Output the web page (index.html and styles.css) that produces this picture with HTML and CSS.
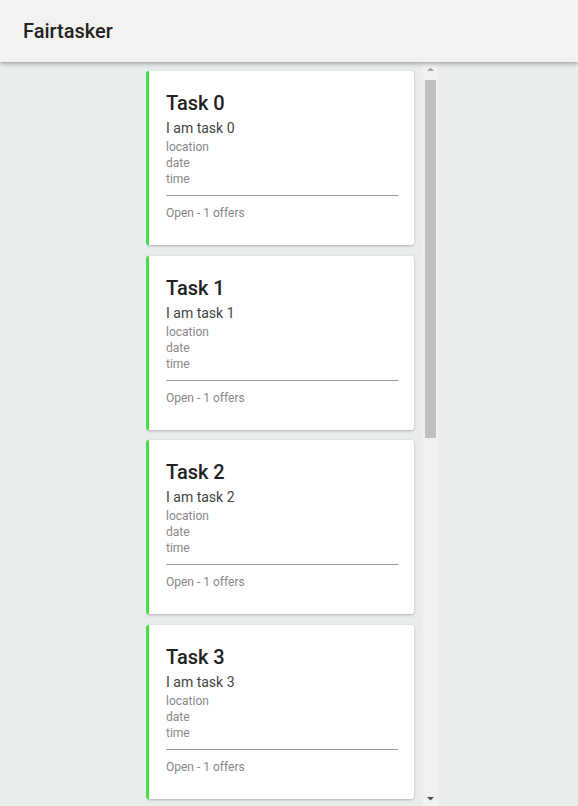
FILE: index.html
```html
<!DOCTYPE html>
<html>
<head>
<meta charset="utf-8">
<link rel="stylesheet" href="styles.css">
</head>
<body>
<header class="topbar"><span class="brand">Fairtasker</span></header>
<main class="main">
  <div class="list">
    <div class="card"><div class="title">Task 0</div><div class="desc">I am task 0</div><div class="meta">location</div><div class="meta">date</div><div class="meta">time</div><hr class="divider"><div class="status">Open - 1 offers</div></div>
    <div class="card"><div class="title">Task 1</div><div class="desc">I am task 1</div><div class="meta">location</div><div class="meta">date</div><div class="meta">time</div><hr class="divider"><div class="status">Open - 1 offers</div></div>
    <div class="card"><div class="title">Task 2</div><div class="desc">I am task 2</div><div class="meta">location</div><div class="meta">date</div><div class="meta">time</div><hr class="divider"><div class="status">Open - 1 offers</div></div>
    <div class="card"><div class="title">Task 3</div><div class="desc">I am task 3</div><div class="meta">location</div><div class="meta">date</div><div class="meta">time</div><hr class="divider"><div class="status">Open - 1 offers</div></div>
  </div>
  <div class="scrollbar">
    <div class="sb-btn"><svg width="15" height="15" viewBox="0 0 15 15"><path d="M4 9 L7.5 5.5 L11 9 Z" fill="#a3a3a3"/></svg></div>
    <div class="sb-track"><div class="sb-thumb"></div></div>
    <div class="sb-btn"><svg width="15" height="15" viewBox="0 0 15 15"><path d="M4 6 L7.5 9.5 L11 6 Z" fill="#505050"/></svg></div>
  </div>
</main>
</body>
</html>
```
FILE: styles.css
```css
html, body {
  margin: 0;
  padding: 0;
  height: 100%;
  overflow: hidden;
}
body {
  font-family: Roboto, "Liberation Sans", sans-serif;
  background: #e8eded;
  display: flex;
  flex-direction: column;
}
.topbar {
  height: 62px;
  flex: none;
  background: #f3f2f0;
  display: flex;
  align-items: center;
  padding-left: 23px;
  box-shadow: 0 2px 4px rgba(0,0,0,0.3);
  position: relative;
  z-index: 1;
}
.brand {
  font-size: 20px;
  color: #222;
  font-weight: 500;
}
.main {
  flex: 1;
  min-height: 0;
  display: flex;
  padding-left: 146px;
}
.list {
  width: 277px;
  height: 100%;
  overflow: hidden;
  box-sizing: border-box;
  padding: 9px 9px 10px 0;
  display: flex;
  flex-direction: column;
  gap: 10.5px;
}
.scrollbar {
  width: 15px;
  height: 100%;
  background: #f1f1f1;
  display: flex;
  flex-direction: column;
}
.sb-btn {
  height: 15px;
  flex: none;
  display: flex;
}
.sb-track {
  flex: 1;
  padding: 3px 2px 0 2px;
}
.sb-thumb {
  height: 358px;
  background: #c1c1c1;
}
.card {
  flex: none;
  background: #fff;
  border-left: 3px solid #45de45;
  border-radius: 3px;
  box-shadow: 0 1px 3px rgba(0,0,0,0.25);
  padding: 20px 16px 24px 17px;
}
.title {
  font-size: 20px;
  font-weight: 500;
  line-height: 24px;
  color: #222;
}
.desc {
  font-size: 14px;
  line-height: 20px;
  color: #444;
  margin-top: 3px;
  margin-bottom: 1px;
}
.meta {
  font-size: 12px;
  line-height: 16px;
  color: #888;
}
.divider {
  border: 0;
  border-top: 1px solid #999;
  margin: 8px 0 9px 0;
  height: 0;
}
.status {
  font-size: 12px;
  line-height: 16px;
  color: #888;
}
```
